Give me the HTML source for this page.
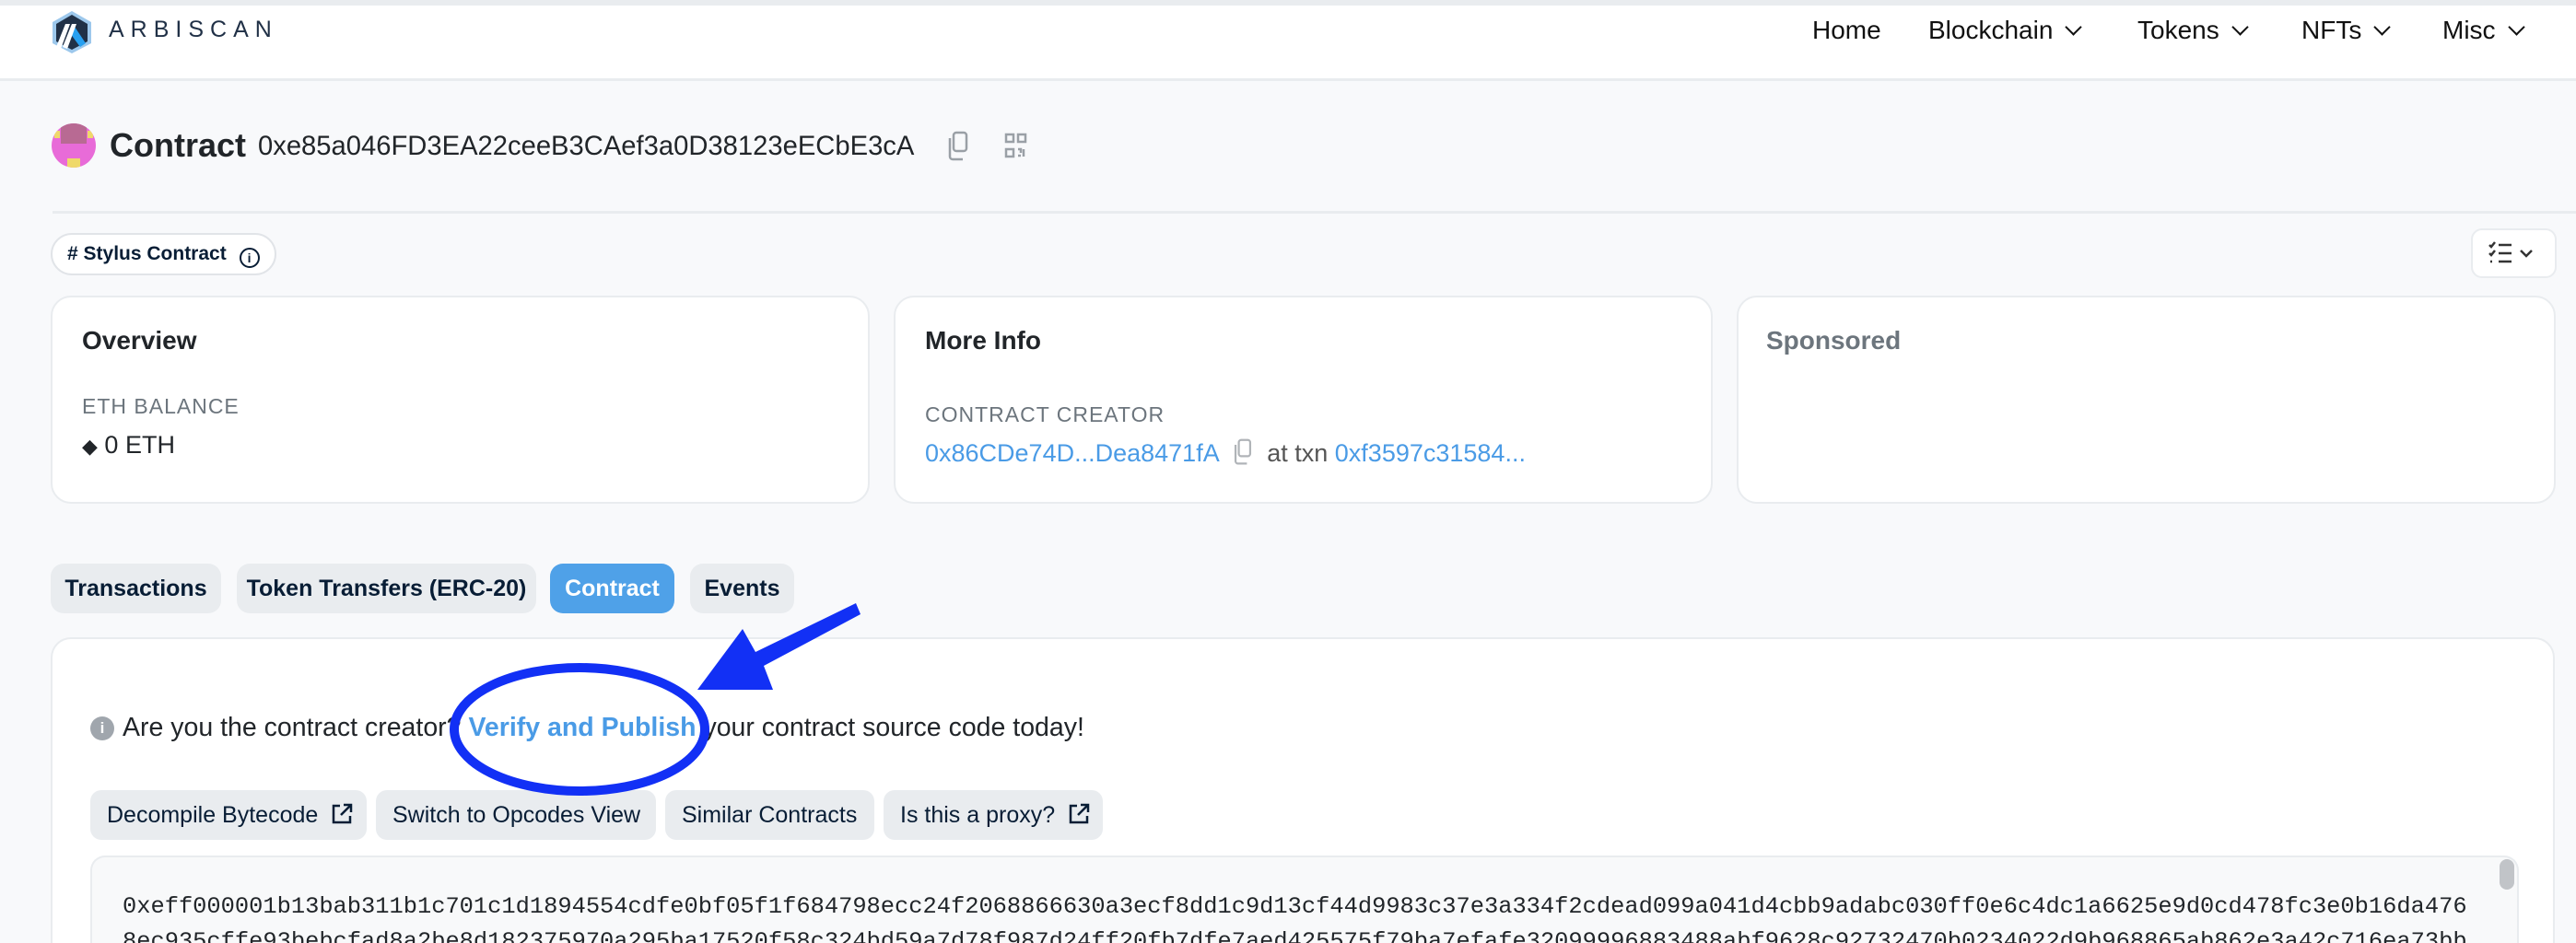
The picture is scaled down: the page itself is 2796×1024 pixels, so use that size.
<!DOCTYPE html>
<html style="overflow:hidden;height:1024px"><head><meta charset="utf-8"><style>
*{box-sizing:border-box;margin:0;padding:0}
html,body{overflow:hidden}
body{width:2796px;height:1024px;background:#f8f9fb;font-family:"Liberation Sans",sans-serif;color:#081d35;position:relative}
#w{position:absolute;left:0;top:0;width:2796px;height:1024px;overflow:hidden}
.abs{position:absolute}
.hdr{left:0;top:0;width:2796px;height:88px;background:#fff;border-top:6px solid #e9ecef;border-bottom:3px solid #e9ecef}
.nav{top:17px;font-size:28px;color:#111;white-space:nowrap}
.chev{display:inline-block;width:13px;height:13px;border-right:2.6px solid #111;border-bottom:2.6px solid #111;transform:rotate(45deg);margin-left:16px;position:relative;top:-6px}
.card{background:#fff;border:2px solid #e9ecef;border-radius:22px}
.h{font-size:28px;font-weight:bold;color:#212529}
.lbl{font-size:23px;color:#6c757d;letter-spacing:1px}
.link{color:#4a9be6}
.tab{top:612px;height:54px;border-radius:14px;background:#e9ecef;font-size:25px;font-weight:bold;line-height:54px;text-align:center;color:#081d35}
.btn{top:858px;height:54px;border-radius:12px;background:#e9ecef;font-size:25px;line-height:54px;padding-left:18px;color:#081d35;white-space:nowrap}
.code{font-family:"Liberation Mono",monospace;font-size:25.4px;line-height:30px;height:30px;color:#212529;white-space:nowrap;left:133px}
</style></head><body><div id="w">
<div class="abs hdr"></div>
<svg class="abs" style="left:54px;top:11px" width="48" height="48" viewBox="0 0 48 48">
<polygon points="24,1 45,13 45,36 24,47 3,36 3,13" fill="#9dc8ec"/>
<polygon points="24,5 41,15 41,34 24,43 7,34 7,15" fill="#213147"/>
<polygon points="27,18 39,36 33,40 22,25" fill="#28a0f0"/>
<polygon points="17,15 22,15 12,42 7,40" fill="#fff"/>
<polygon points="24,15 29,15 19,42 14,40" fill="#fff"/>
</svg>
<div class="abs" style="left:118px;top:18px;font-size:25px;letter-spacing:7px;color:#213147">ARBISCAN</div>
<div class="abs nav" style="left:1967px">Home</div>
<div class="abs nav" style="left:2093px">Blockchain<span class="chev"></span></div>
<div class="abs nav" style="left:2320px">Tokens<span class="chev"></span></div>
<div class="abs nav" style="left:2498px">NFTs<span class="chev"></span></div>
<div class="abs nav" style="left:2651px">Misc<span class="chev"></span></div>

<div class="abs" style="left:56px;top:134px;width:48px;height:48px;border-radius:50%;background:#e86bd8;overflow:hidden">
<div class="abs" style="left:10px;top:0;width:28px;height:22px;background:#b86a93"></div>
<div class="abs" style="left:17px;top:38px;width:14px;height:10px;background:#efd96a"></div>
<div class="abs" style="left:3px;top:8px;width:6px;height:8px;background:#efd96a"></div>
<div class="abs" style="left:39px;top:8px;width:6px;height:8px;background:#efd96a"></div>
</div>
<div class="abs" style="left:119px;top:137px;font-size:36px;font-weight:bold;color:#212529">Contract</div>
<div class="abs" style="left:280px;top:143px;font-size:29.2px;color:#212529">0xe85a046FD3EA22ceeB3CAef3a0D38123eECbE3cA</div>
<svg class="abs" style="left:1025px;top:142px" width="30" height="34" viewBox="0 0 30 34" fill="none" stroke="#9aa0a6" stroke-width="2.5"><rect x="10" y="2" width="14" height="20" rx="3"/><path d="M6 8v20a3 3 0 0 0 3 3h11"/></svg>
<svg class="abs" style="left:1090px;top:144px" width="26" height="30" viewBox="0 0 26 30" fill="none" stroke="#9aa0a6" stroke-width="2.5"><rect x="2" y="2" width="8" height="8"/><rect x="15" y="2" width="8" height="8"/><rect x="2" y="18" width="8" height="8"/><path d="M15 18h3v4M21 18v8M15 25h3"/></svg>
<div class="abs" style="left:57px;top:229px;width:2739px;height:3px;background:#e9ecef"></div>
<div class="abs" style="left:55px;top:253px;width:245px;height:46px;border:2px solid #e1e4e8;border-radius:23px;background:#fff;font-size:21px;font-weight:bold;line-height:42px;padding-left:16px;color:#081d35;white-space:nowrap">#&nbsp;Stylus Contract <span style="display:inline-block;width:22px;height:22px;border:2px solid #081d35;border-radius:50%;font-size:14px;line-height:18px;text-align:center;vertical-align:-3px;margin-left:8px">i</span></div>
<div class="abs" style="left:2682px;top:248px;width:93px;height:54px;border:2px solid #e9ecef;border-radius:12px;background:#fff"></div>
<svg class="abs" style="left:2700px;top:260px" width="60" height="30" viewBox="0 0 60 30" fill="none" stroke="#333" stroke-width="2.5"><path d="M2 6l2 2 4-5M2 15l2 2 4-5M12 6h14M12 15h14M12 24h14M3 24h2"/><path d="M36 12l6 6 6-6"/></svg>

<div class="abs card" style="left:55px;top:321px;width:889px;height:226px"></div>
<div class="abs h" style="left:89px;top:354px">Overview</div>
<div class="abs lbl" style="left:89px;top:428px">ETH BALANCE</div>
<div class="abs" style="left:89px;top:468px;font-size:27px;color:#212529"><span style="font-size:22px">◆</span> 0 ETH</div>
<div class="abs card" style="left:970px;top:321px;width:889px;height:226px"></div>
<div class="abs h" style="left:1004px;top:354px">More Info</div>
<div class="abs lbl" style="left:1004px;top:437px">CONTRACT CREATOR</div>
<div class="abs" style="left:1004px;top:476px;font-size:27px;color:#555;white-space:nowrap"><span class="link">0x86CDe74D...Dea8471fA</span> <svg width="30" height="30" viewBox="0 0 30 34" fill="none" stroke="#b0b4b8" stroke-width="2.5" style="vertical-align:-5px;margin:0 4px"><rect x="10" y="2" width="14" height="20" rx="3"/><path d="M6 8v20a3 3 0 0 0 3 3h11"/></svg> at txn <span class="link">0xf3597c31584...</span></div>
<div class="abs card" style="left:1885px;top:321px;width:889px;height:226px"></div>
<div class="abs h" style="left:1917px;top:354px;color:#6c757d">Sponsored</div>

<div class="abs tab" style="left:55px;width:185px">Transactions</div>
<div class="abs tab" style="left:257px;width:325px">Token Transfers (ERC-20)</div>
<div class="abs tab" style="left:597px;width:135px;background:#4fa1e8;color:#fff">Contract</div>
<div class="abs tab" style="left:749px;width:113px">Events</div>

<div class="abs" style="left:55px;top:692px;width:2718px;height:332px;background:#fff;border:2px solid #e9ecef;border-bottom:none;border-radius:22px 22px 0 0"></div>
<div class="abs" style="left:98px;top:778px;width:26px;height:26px;border-radius:50%;background:#a0a6ad;color:#fff;font-size:17px;font-weight:bold;text-align:center;line-height:26px">i</div>
<div class="abs" style="left:133px;top:774px;font-size:28.5px;color:#212529;white-space:nowrap">Are you the contract creator? <span class="link" style="font-weight:bold">Verify and Publish</span> your contract source code today!</div>

<div class="abs btn" style="left:98px;width:300px">Decompile Bytecode <svg width="26" height="26" viewBox="0 0 26 26" fill="none" stroke="#081d35" stroke-width="2.5" style="vertical-align:-4px;margin-left:6px"><path d="M11 4H4v18h18v-7M15 3h8v8M23 3L12 14"/></svg></div>
<div class="abs btn" style="left:408px;width:304px">Switch to Opcodes View</div>
<div class="abs btn" style="left:722px;width:227px">Similar Contracts</div>
<div class="abs btn" style="left:959px;width:238px">Is this a proxy? <svg width="26" height="26" viewBox="0 0 26 26" fill="none" stroke="#081d35" stroke-width="2.5" style="vertical-align:-4px;margin-left:6px"><path d="M11 4H4v18h18v-7M15 3h8v8M23 3L12 14"/></svg></div>

<div class="abs" style="left:98px;top:929px;width:2636px;height:95px;background:#f8f9fa;border:2px solid #e9ecef;border-bottom:none;border-radius:16px 16px 0 0;overflow:hidden">
<div class="abs code" style="left:33px;top:39px">0xeff000001b13bab311b1c701c1d1894554cdfe0bf05f1f684798ecc24f2068866630a3ecf8dd1c9d13cf44d9983c37e3a334f2cdead099a041d4cbb9adabc030ff0e6c4dc1a6625e9d0cd478fc3e0b16da476</div>
<div class="abs code" style="left:33px;top:77px">8ec935cffe93bebcfad8a2be8d182375970a295ba17520f58c324bd59a7d78f987d24ff20fb7dfe7aed425575f79ba7efafe32099996883488abf9628c92732470b0234022d9b968865ab862e3a42c716ea73bb</div>
<div class="abs" style="left:2613px;top:2px;width:16px;height:33px;border-radius:8px;background:#c1c4c8"></div>
</div>

<svg class="abs" style="left:0;top:0" width="2796" height="1024">
<ellipse cx="629" cy="792" rx="136" ry="67" fill="none" stroke="#1230f5" stroke-width="10"/>
<polygon points="929,655 934,667 829,723 839,749 757,749 806,683 820,708" fill="#1230f5"/>
</svg>
</div></body></html>
